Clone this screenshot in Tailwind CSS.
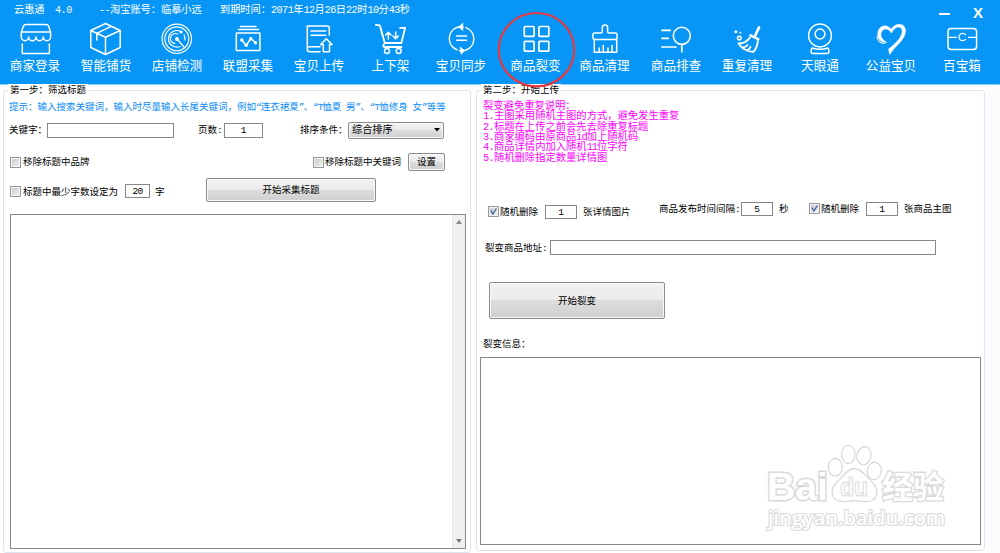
<!DOCTYPE html>
<html lang="zh-CN">
<head>
    <meta charset="UTF-8">
    <meta name="viewport" content="width=device-width, initial-scale=1.0">
    <title>云惠通 4.0</title>
    <script src="https://cdn.jsdelivr.net/npm/@tailwindcss/browser@4"></script>
    <style>
        body {
            font-family: 'Liberation Mono', 'Noto Sans CJK SC', monospace;
        }
        .tool svg {
            width: 34px;
            height: 34px;
            fill: none;
            stroke: white;
            stroke-width: 1.5;
            stroke-linejoin: round;
            stroke-linecap: round;
        }
        .btn {
            border: 1px solid #8c8c8c;
            border-radius: 2px;
            box-shadow: inset 0 0 0 1px #f8f8f8;
            background: linear-gradient(#f2f2f2, #ebebeb 48%, #dddddd 50%, #cfcfcf);
        }
        .check {
            border: 1px solid #999;
            box-shadow: inset 0 0 0 1px #f4f4f4;
            background: linear-gradient(135deg, #c4c8cc, #f4f4f4);
        }
        .label {
            padding-top: 2px;
        }
    </style>
</head>
<body class="w-[1000px] h-[553px] overflow-hidden bg-[#fcfcff] text-[9.5px] leading-[14px] text-black whitespace-nowrap">

    <!-- Title bar and toolbar -->
    <header class="relative h-[85px] bg-[#0896f6] border-b border-[#8fd0fb] text-white">
        <div class="flex h-[22px] pl-[14px] text-[10.2px] leading-[21px]">
            <span class="w-[41px]">云惠通</span>
            <span class="w-[44px] tracking-[-0.5px]">4.0</span>
            <span class="w-[121px]"><span class="tracking-[-0.6px]">--</span>淘宝账号：临摹小远</span>
            <span>到期时间：<span class="tracking-[-0.55px]">2071</span>年<span class="tracking-[-0.55px]">12</span>月<span class="tracking-[-0.55px]">26</span>日<span class="tracking-[-0.55px]">22</span>时<span class="tracking-[-0.55px]">10</span>分<span class="tracking-[-0.55px]">43</span>秒</span>
            <span class="ml-auto mt-[13px] w-[11px] h-[2px] bg-white"></span>
            <span class="ml-[23px] mr-[16px] mt-[2px] w-[11px] text-[15px] font-bold font-['Liberation_Sans']">X</span>
        </div>

        <nav class="flex -ml-[0.5px] text-[12.6px] leading-[22px]">
            <div class="tool w-[71px] shrink-0 flex flex-col items-center">
                <svg viewBox="0 0 34 34"><path d="M3.3 10 5.6 4Q6.2 2.5 7.8 2.5H28.5Q30 2.5 30.6 4L32.6 10V15A3.6 3.6 0 0 1 25.3 15 3.6 3.6 0 0 1 18 15 3.6 3.6 0 0 1 10.6 15 3.6 3.6 0 0 1 3.3 15ZM3.3 10H32.6M4.3 22V31.4H31.4V22"/></svg>
                <span>商家登录</span>
            </div>
            <div class="tool w-[71px] shrink-0 flex flex-col items-center">
                <svg viewBox="0 0 34 34"><path d="M16.5 1.5 31.2 8.5V25.5L16.5 32.5 1.8 25.5V8.5ZM1.8 8.5 16.5 15.3 31.2 8.5M16.5 15.3V32.5M7.8 18V11.3L22 4.3"/></svg>
                <span>智能铺货</span>
            </div>
            <div class="tool w-[71px] shrink-0 flex flex-col items-center">
                <svg viewBox="0 0 34 34"><g stroke-width="1.2"><circle cx="16.8" cy="16.8" r="14.7"/><circle cx="16.8" cy="16.8" r="12"/><path d="M19.5 9A8.3 8.3 0 1 0 20 24.5M24 13A8.3 8.3 0 0 1 25 18M17.5 12A5 5 0 1 0 15 21.5M17 17 24 25"/></g><circle cx="17" cy="17" r="1.2" fill="white"/><circle cx="21" cy="10" r=".8" fill="white"/></svg>
                <span>店铺检测</span>
            </div>
            <div class="tool w-[71px] shrink-0 flex flex-col items-center">
                <svg viewBox="0 0 34 34"><path d="M9.5 4.5H25M7.5 7.5H27.5"/><rect x="5.3" y="11" width="23.6" height="17.6" rx=".6"/><path d="M10.8 18 15.2 23.5 19.8 16.5 24.5 20.7"/><g fill="white" stroke="none"><circle cx="10.8" cy="18" r="1.7"/><circle cx="15.2" cy="23.3" r="1.7"/><circle cx="19.8" cy="16.7" r="1.7"/><circle cx="24.5" cy="20.7" r="1.7"/></g></svg>
                <span>联盟采集</span>
            </div>
            <div class="tool w-[71px] shrink-0 flex flex-col items-center">
                <svg viewBox="0 0 34 34"><path d="M27.3 13V6Q27.3 4 25.3 4H5.3V27.5Q5.3 29.7 8 29.7H18M5.3 26.5Q5.5 24.7 8 24.7H18M9 9H23.7M9 13.3H23.7M24.3 16.8 30 22.5H27.5V29.7H21.3V22.5H18.7Z"/></svg>
                <span>宝贝上传</span>
            </div>
            <div class="tool w-[71px] shrink-0 flex flex-col items-center ml-[0.5px]">
                <svg viewBox="0 0 34 34"><path stroke-width="1.8" d="M1.8 2.8 5.8 3.3 10.8 21H27.3L31.2 5.8H26M8 12 7 7M10.8 21Q7.5 25 11 25H27.5"/><circle cx="13" cy="29" r="2.5"/><circle cx="24.7" cy="29" r="2.5"/><path d="M14.3 17V10.5M11.7 13 14.3 10.3 17 13M21.7 10V16.5M19 14 21.7 16.7 24.3 14"/></svg>
                <span>上下架</span>
            </div>
            <div class="tool w-[71px] shrink-0 flex flex-col items-center -ml-[0.5px]">
                <svg viewBox="0 0 34 34"><path d="M13 27.8A12 12 0 0 1 13.5 5.2L19 5M22 5.6A12 12 0 0 1 21.5 28.3L15.5 28.7M12.6 14H22.6M12.6 18.3H22.6"/><path fill="white" stroke-width=".8" d="M18.5 1.5 14.7 5 18.5 8.2ZM16.5 25.5 20.5 28.6 17.5 32Z"/></svg>
                <span>宝贝同步</span>
            </div>
            <div class="tool w-[71px] shrink-0 flex flex-col items-center ml-[3.5px]">
                <svg viewBox="0 0 34 34"><g stroke-width="1.7"><rect x="5.3" y="4.5" width="9.8" height="9.8" rx=".7"/><rect x="20" y="4.5" width="9.8" height="9.8" rx=".7"/><rect x="5.3" y="19.3" width="9.8" height="9.8" rx=".7"/><rect x="20" y="19.3" width="9.8" height="9.8" rx=".7"/></g></svg>
                <span>商品裂变</span>
            </div>
            <div class="tool w-[71px] shrink-0 flex flex-col items-center -ml-[2px]">
                <svg viewBox="0 0 34 34"><path d="M6 17.5 5 16.5V12.5Q5 11 6.5 11H12.5Q14.3 11 14.3 9.5V5.3Q14.3 3 17 3T19.6 5.3V9.5Q19.6 11 21.5 11H27.5Q29 11 29 12.5V16.5L28.3 17.5ZM6.3 17.5V30.3H28.7V17.5M11.3 30V26M15.3 30V23.5M20 30V26M24 30V23.5"/></svg>
                <span>商品清理</span>
            </div>
            <div class="tool w-[71px] shrink-0 flex flex-col items-center ml-[0.5px]">
                <svg viewBox="0 0 34 34"><path stroke-width="1.7" d="M2.8 8.3H11.3M2.8 16.3H9.3M2.8 25H17M22.8 22.3V29.7"/><circle cx="22.8" cy="13.8" r="8.5" stroke-width="1.6"/></svg>
                <span>商品排查</span>
            </div>
            <div class="tool w-[71px] shrink-0 flex flex-col items-center">
                <svg viewBox="0 0 34 34"><path stroke-width="2.8" d="M29 5.5 25.5 13"/><path stroke-width="2.6" d="M20.5 13.3 28.3 17.2"/><path stroke-width="1.9" d="M20 15.5Q16 21.5 8.5 21.5 14 29.5 23.5 29.8 27.5 25 27.8 19M12.5 25.8Q16 25 17.5 23M18 28.5 20.5 25"/><circle cx="9.3" cy="16" r="1.8"/><g fill="white" stroke="none"><circle cx="5.9" cy="9.7" r="1.5"/><circle cx="10.4" cy="10.7" r="1"/></g></svg>
                <span>重复清理</span>
            </div>
            <div class="tool w-[71px] shrink-0 flex flex-col items-center ml-[2px]">
                <svg viewBox="0 0 34 34"><circle cx="17" cy="13.5" r="11.4"/><circle cx="17" cy="12" r="4.9"/><path d="M9 26Q8 28 8 29.7 8 31.4 10 31.4H24Q26 31.4 26 29.7 26 28 25 26 17 28.5 9 26Z"/></svg>
                <span>天眼通</span>
            </div>
            <div class="tool w-[71px] shrink-0 flex flex-col items-center">
                <svg viewBox="0 0 34 34"><path fill="white" stroke-width=".5" d="M17 7.2C21 1.2 27.5 1.2 30.2 4.5 34 10 29.5 18 20 26.5L15.8 32.5 14.5 27C20 23 26.5 17 28 11 29 6 25.5 4 22.5 5.5 20 6.7 18.5 9 17.5 11 15 7 11 5.7 8.2 8.8 5.5 12 7 17.5 13 20.5 7 20.5 3.2 16.5 3.7 11.5 4.5 3.5 12.5 1.2 17 7.2Z"/><path stroke-width="1.1" d="M3 14.5Q3.5 20.5 10.5 21.5"/></svg>
                <span>公益宝贝</span>
            </div>
            <div class="tool w-[71px] shrink-0 flex flex-col items-center">
                <svg viewBox="0 0 34 34"><rect x="3" y="6.5" width="28.6" height="21" rx="3.2"/><path stroke-width="1.2" d="M3 15.3H11.5M23.5 15.3H31.5M20.5 12.6A3.7 3.7 0 1 0 20.5 17.4"/></svg>
                <span>百宝箱</span>
            </div>
        </nav>

        <!-- Red ring around the active tool -->
        <svg class="absolute z-20 left-[497px] top-[11px] w-[80px] h-[78px]" viewBox="0 0 80 78" fill="none"><ellipse cx="39.5" cy="38.7" rx="37.7" ry="36.7" stroke="#e4393f" stroke-width="2.2"/></svg>
    </header>

    <main class="flex items-start h-[468px] pt-[5px] pl-[3px] bg-white w-[986px]">

        <!-- Step 1 -->
        <section class="relative w-[468px] h-[463px] border border-[#dde6ee] rounded-[3px] flex flex-col">
            <h2 class="absolute -top-[7px] left-[4px] px-[2px] bg-white">第一步：筛选标题</h2>

            <p class="mt-[10px] ml-[5px] h-[14px] text-[#0b8cf5]">提示：输入搜索关键词，输入时尽量输入长尾关键词，例如<span class="tracking-[-1px]">“</span>连衣裙夏<span class="tracking-[-1px]">”</span>、<span class="tracking-[-1px]">“T</span>恤夏<span class="tracking-[-1px]"> </span>男<span class="tracking-[-1px]">”</span>、<span class="tracking-[-1px]">“T</span>恤修身<span class="tracking-[-1px]"> </span>女<span class="tracking-[-1px]">”</span>等等</p>

            <div class="flex items-center mt-[7px] ml-[5px] h-[16px]">
                <span class="label w-[38px]">关键字：</span>
                <span class="w-[127px] h-[15px] border border-[#888]"></span>
                <span class="label ml-[24px] w-[26px]">页数:</span>
                <span class="w-[39px] h-[15px] border border-[#888] text-center leading-[14px]">1</span>
                <span class="label ml-[37px] w-[48px]">排序条件：</span>
                <span class="btn w-[96px] h-[17px] pl-[3px] pr-[3px] flex items-center justify-between text-[10.2px]">
                    <span class="label">综合排序</span>
                    <svg class="w-[6px] h-[4px]" viewBox="0 0 6 4"><path d="M0 0H6L3 3.5Z"/></svg>
                </span>
            </div>

            <div class="flex items-center mt-[15px] ml-[6px] h-[18px]">
                <span class="check w-[11px] h-[11px]"></span>
                <span class="label ml-[2px] w-[290px]">移除标题中品牌</span>
                <span class="check w-[11px] h-[11px]"></span>
                <span class="label ml-px w-[83px]">移除标题中关键词</span>
                <span class="btn w-[37px] h-[18px] text-center leading-[18px]">设置</span>
            </div>

            <div class="flex items-center mt-[7px] ml-[6px] h-[24px]">
                <span class="check w-[11px] h-[11px] mt-[3px]"></span>
                <span class="label ml-[2px] w-[102px] mt-[3px]">标题中最少字数设定为</span>
                <span class="w-[25px] h-[14px] mt-[2px] border border-[#888] text-center leading-[13px] tracking-[-0.7px]">20</span>
                <span class="label ml-[5px] w-[51px] mt-[3px]">字</span>
                <span class="btn w-[170px] h-[24px] text-center leading-[24px]">开始采集标题</span>
            </div>

            <div class="flex justify-end mt-[12px] ml-[6px] w-[456px] h-[335px] border border-[#888]">
                <div class="flex flex-col items-center justify-between w-[13px] py-[5px] bg-[#f0f0f0] border-l border-[#e0e6ec]">
                    <svg class="w-[6px] h-[4px]" viewBox="0 0 6 4"><path fill="#888" d="M0 4H6L3 0Z"/></svg>
                    <svg class="w-[6px] h-[4px]" viewBox="0 0 6 4"><path fill="#777" d="M0 0H6L3 4Z"/></svg>
                </div>
            </div>
        </section>

        <!-- Step 2 -->
        <section class="relative ml-[5px] w-[509px] h-[461px] border border-[#dde6ee] rounded-[3px] flex flex-col">
            <h2 class="absolute -top-[7px] left-[4px] px-[2px] bg-white">第二步：开始上传</h2>

            <div class="mt-[10px] ml-[6px] h-[63px] text-[10.3px] leading-[10.35px] text-[#ff00ff]">
                <p>裂变避免重复说明：</p>
                <p><span class="tracking-[-0.7px]">1.</span>主图采用随机主图的方式，避免发生重复</p>
                <p><span class="tracking-[-0.7px]">2.</span>标题在上传之前会先去除重复标题</p>
                <p><span class="tracking-[-0.7px]">3.</span>商家编码由原商品<span class="tracking-[-1px]">id</span>加上随机码</p>
                <p><span class="tracking-[-0.7px]">4.</span>商品详情内加入随机<span class="tracking-[-1px]">11</span>位字符</p>
                <p><span class="tracking-[-0.7px]">5.</span>随机删除指定数量详情图</p>
            </div>

            <div class="flex items-start mt-[37px] ml-[11px] h-[18px]">
                <div class="flex items-center mt-[3px] h-[15px]">
                    <span class="check w-[11px] h-[11px]"><svg viewBox="0 0 9 9"><path d="M1.8 3.5 3.9 7 7.4 1.5" fill="none" stroke="#3c5a9a" stroke-width="1.3"/></svg></span>
                    <span class="label ml-px w-[45px]">随机删除</span>
                    <span class="w-[32px] h-[14px] border border-[#888] text-center leading-[13px]">1</span>
                    <span class="label ml-[6px] w-[76px]">张详情图片</span>
                </div>
                <div class="flex items-center h-[15px]">
                    <span class="label w-[82px]">商品发布时间间隔:</span>
                    <span class="w-[32px] h-[14px] border border-[#888] text-center leading-[13px]">5</span>
                    <span class="label ml-[6px] w-[30px]">秒</span>
                    <span class="check w-[11px] h-[11px]"><svg viewBox="0 0 9 9"><path d="M1.8 3.5 3.9 7 7.4 1.5" fill="none" stroke="#3c5a9a" stroke-width="1.3"/></svg></span>
                    <span class="label ml-px w-[45px]">随机删除</span>
                    <span class="w-[32px] h-[14px] border border-[#888] text-center leading-[13px]">1</span>
                    <span class="label ml-[6px]">张商品主图</span>
                </div>
            </div>

            <div class="flex items-center mt-[21px] ml-[8px] h-[15px]">
                <span class="label w-[65px]">裂变商品地址:</span>
                <span class="w-[386px] h-[15px] border border-[#888]"></span>
            </div>

            <div class="btn mt-[27px] ml-[12px] w-[176px] h-[37px] text-center leading-[37px]">开始裂变</div>

            <p class="mt-[19px] ml-[6px] h-[19px]">裂变信息：</p>

            <div class="relative ml-[3px] w-[501px] h-[188px] border border-[#888]">
                <!-- Watermark -->
                <svg class="absolute left-[284px] top-[83px] w-[184px] h-[94px] overflow-visible" viewBox="765 442 184 94" fill="white" stroke="#dadada" stroke-width="1.3">
                    <text x="767" y="501" font-family="Liberation Sans" font-size="39" font-weight="bold" paint-order="stroke" stroke-width="3" textLength="61" lengthAdjust="spacingAndGlyphs">Bai</text>
                    <path d="M854.5 469.500C862 469.500 866 478 872 483 880 491 878 502 867 502.500 862 503 859 501.500 854.500 501.500S847 503 842 502.500C831 502 829 491 837 483 843 478 847 469.500 854.500 469.500Z"/>
                    <ellipse cx="835.3" cy="468.3" rx="7" ry="8.8"/>
                    <ellipse cx="848.3" cy="455.3" rx="6.7" ry="9.2"/>
                    <ellipse cx="864" cy="456.7" rx="7" ry="9" transform="rotate(12 864 456.7)"/>
                    <ellipse cx="874.3" cy="472" rx="7" ry="8.8" transform="rotate(8 874.3 472)"/>
                    <text x="840" y="497" font-family="Liberation Sans" font-size="25" font-weight="bold" stroke-width="1" textLength="28" lengthAdjust="spacingAndGlyphs">du</text>
                    <text x="882" y="499" font-family="Noto Sans CJK SC" font-size="31" font-weight="bold" paint-order="stroke" stroke-width="2.6" textLength="62">经验</text>
                    <text x="768" y="526" font-family="Open Sans" font-size="20" font-weight="600" paint-order="stroke" stroke-width="2.2" textLength="177" lengthAdjust="spacingAndGlyphs">jingyan.baidu.com</text>
                </svg>
            </div>
        </section>
    </main>
</body>
</html>
